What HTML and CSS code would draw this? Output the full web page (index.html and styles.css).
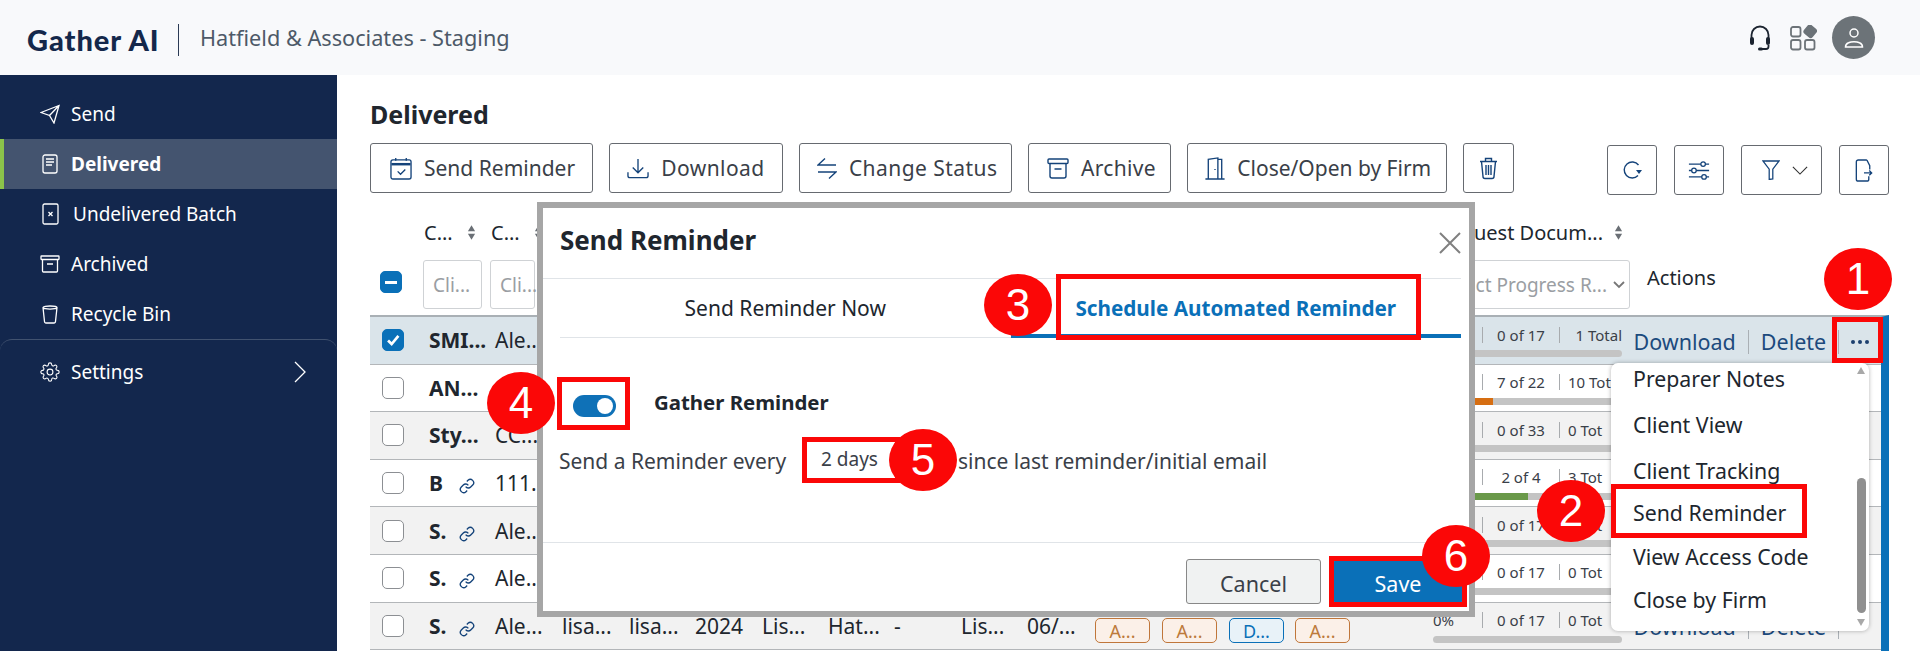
FILE: index.html
```html
<!DOCTYPE html>
<html lang="en">
<head>
<meta charset="utf-8">
<title>Gather AI - Delivered</title>
<link rel="stylesheet" href="styles.css">
</head>
<body>
<svg class="defs" width="0" height="0" aria-hidden="true">
  <symbol id="i-link" viewBox="0 0 24 24"><path d="M10 13a5 5 0 0 0 7.54.54l3-3a5 5 0 0 0-7.07-7.07l-1.72 1.71"/><path d="M14 11a5 5 0 0 0-7.54-.54l-3 3a5 5 0 0 0 7.07 7.07l1.71-1.71"/></symbol>
  <symbol id="i-sort" viewBox="0 0 10 16"><path d="M5 0l4 6.5H1zM5 16l-4-6.5h8z"/></symbol>
  <symbol id="i-check" viewBox="0 0 20 20"><path d="M4.5 10.5l4 4 7.5-9"/></symbol>
</svg>
<div class="app">
  <header class="topbar">
    <span class="logo">Gather AI</span>
    <span class="firm">Hatfield &amp; Associates - Staging</span>
    <div class="top-icons">
      <svg class="ic-headset" viewBox="0 0 22 26"><path class="st" d="M2.5 15V10a8.5 8.5 0 0 1 17 0v5"/><rect class="fl" x="1" y="12" width="4" height="8" rx="2"/><rect class="fl" x="17" y="12" width="4" height="8" rx="2"/><path class="st" d="M19.5 20v1.500a2.500 2.500 0 0 1-2.500 2.500h-4"/><rect class="fl" x="9" y="22.500" width="5" height="3" rx="1.500"/></svg>
      <svg class="ic-apps" viewBox="0 0 27 26"><rect x="1" y="2" width="9.500" height="9.500" rx="2"/><rect x="1" y="15" width="9.500" height="9.500" rx="2"/><rect x="15" y="15" width="9.500" height="9.500" rx="2"/><rect class="solid" x="15.500" y="1.500" width="9.500" height="9.500" rx="2" transform="rotate(40 20.200 6.200)"/></svg>
      <span class="avatar"><svg viewBox="0 0 22 22"><circle cx="11" cy="6" r="4"/><path d="M2.500 20c0-2 1-3.500 3-4.300 1.500-.7 3-1 5.500-1s4 .3 5.500 1c2 .8 3 2.300 3 4.300z"/></svg></span>
    </div>
  </header>
  <div class="shell">
    <aside class="sidebar">
      <nav class="nav">
        <a class="nav-item"><svg class="nav-ic" viewBox="0 0 20 20"><path d="M1 8.500L19 1.500l-5 17.500-4.500-7.500zM9.500 11.500L19 1.500"/></svg>Send</a>
        <a class="nav-item active"><svg class="nav-ic" viewBox="0 0 20 20"><rect x="3" y="1" width="14" height="18" rx="2"/><path d="M6 5h8M6 8h8M6 11h6"/></svg>Delivered</a>
        <a class="nav-item undel"><svg class="nav-ic" viewBox="0 0 20 22"><rect x="3" y="1" width="15" height="20" rx="1.500"/><path d="M8.500 9l4 4M12.500 9l-4 4"/></svg>Undelivered Batch</a>
        <a class="nav-item"><svg class="nav-ic" viewBox="0 0 20 20"><rect x="1" y="2" width="18" height="3.500" rx=".5"/><path d="M2.500 5.500V17a1 1 0 0 0 1 1h13a1 1 0 0 0 1-1V5.500M7 10h6"/></svg>Archived</a>
        <a class="nav-item"><svg class="nav-ic" viewBox="0 0 20 20"><path d="M3 3.500c0-2 14-2 14 0l-1.500 14a1.500 1.500 0 0 1-1.500 1.500H6a1.500 1.500 0 0 1-1.500-1.500zM3 3.800c2 1.700 12 1.700 14 0"/></svg>Recycle Bin</a>
      </nav>
      <a class="nav-item settings"><svg class="nav-ic" viewBox="0 0 24 24"><circle cx="12" cy="12" r="3.500"/><path d="M19.400 15a1.650 1.650 0 0 0 .33 1.820l.06.06a2 2 0 0 1 0 2.830 2 2 0 0 1-2.830 0l-.06-.06a1.650 1.650 0 0 0-1.820-.33 1.650 1.650 0 0 0-1 1.510V21a2 2 0 0 1-2 2 2 2 0 0 1-2-2v-.09A1.650 1.650 0 0 0 9 19.400a1.650 1.650 0 0 0-1.820.33l-.06.06a2 2 0 0 1-2.830 0 2 2 0 0 1 0-2.830l.06-.06a1.650 1.650 0 0 0 .33-1.820 1.650 1.650 0 0 0-1.510-1H3a2 2 0 0 1-2-2 2 2 0 0 1 2-2h.09A1.650 1.650 0 0 0 4.600 9a1.650 1.650 0 0 0-.33-1.820l-.06-.06a2 2 0 0 1 0-2.830 2 2 0 0 1 2.830 0l.06.06a1.650 1.650 0 0 0 1.820.33H9a1.650 1.650 0 0 0 1-1.510V3a2 2 0 0 1 2-2 2 2 0 0 1 2 2v.09a1.650 1.650 0 0 0 1 1.510 1.650 1.650 0 0 0 1.820-.33l.06-.06a2 2 0 0 1 2.830 0 2 2 0 0 1 0 2.830l-.06.06a1.650 1.650 0 0 0-.33 1.820V9a1.650 1.650 0 0 0 1.510 1H21a2 2 0 0 1 2 2 2 2 0 0 1-2 2h-.09a1.650 1.650 0 0 0-1.510 1z"/></svg>Settings<svg class="nav-chev" viewBox="0 0 12 22"><path d="M1 1l10 10L1 21"/></svg></a>
    </aside>
    <main class="main">
      <h1 class="page-title">Delivered</h1>
      <div class="toolbar">
        <button class="btn w-send"><svg class="tb-ic" viewBox="0 0 23 24"><rect x="1" y="3" width="21" height="20" rx="2"/><path d="M6 1v3M17 1v3"/><path class="thick" d="M1.500 7.500h20"/><path d="M8 15l3 3 5-5"/></svg>Send Reminder</button>
        <button class="btn w-down"><svg class="tb-ic" viewBox="0 0 23 22"><path d="M11.500 1v14M6 10l5.500 5.500L17 10M1 15v3.500a2 2 0 0 0 2 2h17a2 2 0 0 0 2-2V15"/></svg>Download</button>
        <button class="btn w-status"><svg class="tb-ic ic-swap" viewBox="0 0 20 22"><path d="M8 1L1 7.500h18M12 21l7-6.500H1"/></svg>Change Status</button>
        <button class="btn w-arch"><svg class="tb-ic" viewBox="0 0 22 21"><rect x="1" y="1" width="20" height="4.500" rx="1"/><path d="M3 5.500V18a2 2 0 0 0 2 2h12a2 2 0 0 0 2-2V5.500M7.500 11h7"/></svg>Archive</button>
        <button class="btn w-firm"><svg class="tb-ic ic-door" viewBox="0 0 20 24"><path d="M0 23h20M3 23V2.500L13 1v22M13 2.500h4V23M10 12.500v1"/></svg>Close/Open by Firm</button>
        <button class="btn square"><svg class="tb-ic ic-trash" viewBox="0 0 19 22"><path d="M1 4h17M6.500 3.500V1h6v2.500M2.500 4l1.500 15a2 2 0 0 0 2 2h7a2 2 0 0 0 2-2l1.500-15M7 7.500v10M9.500 7.500v10M12 7.500v10"/></svg></button>
        <div class="tool-right">
          <button class="btn square"><svg class="tb-ic ic-sm" viewBox="0 0 20 20"><path d="M16.500 5A8 8 0 1 0 16 15.500"/><path class="solid" d="M14 10h6l-3 4z"/></svg></button>
          <button class="btn square"><svg class="tb-ic" viewBox="0 0 24 22"><path d="M1 4h13M19 4h4M1 11h3M9 11h14M1 18h14M20 18h3"/><circle cx="16.500" cy="4" r="2.500"/><circle cx="6.500" cy="11" r="2.500"/><circle cx="17.500" cy="18" r="2.500"/></svg></button>
          <button class="btn filter"><svg class="tb-ic ic-funnel" viewBox="0 0 20 22"><path d="M1 1h18l-7 9v11l-4 .5V10z"/></svg><svg class="chev" viewBox="0 0 18 10"><path d="M1 1l8 8 8-8"/></svg></button>
          <button class="btn square"><svg class="tb-ic" viewBox="0 0 18 24"><path d="M12 1H3a2 2 0 0 0-2 2v18a2 2 0 0 0 2 2h9a2 2 0 0 0 2-2v-3M12 1l3 6v4M9 14.500h8M14.500 12l2.500 2.500-2.500 2.500"/></svg></button>
        </div>
      </div>

      <div class="grid head-a">
        <span></span>
        <span class="th">C...<svg class="sort"><use href="#i-sort"/></svg></span>
        <span class="th">C...<svg class="sort"><use href="#i-sort"/></svg></span>
        <span class="th th-doc">uest Docum...<svg class="sort"><use href="#i-sort"/></svg></span>
      </div>
      <div class="grid head-b">
        <span class="check-cell head-check"><span class="box on"><i class="minus"></i></span></span>
        <span class="filter-box">Cli...</span>
        <span class="filter-box">Cli...</span>
        <span class="filter-box fb-progress">ct Progress R...<svg class="mini-chev" viewBox="0 0 12 8"><path d="M1 1l5 5 5-5"/></svg></span>
        <span class="actions-h">Actions</span>
      </div>

      <div class="rows">
        <div class="grid row selected">
          <span class="check-cell"><span class="box on"><svg class="tick"><use href="#i-check"/></svg></span></span>
          <span class="cell name">SMI...</span><span class="cell">Ale...</span>
          <span class="prog"><span></span><span class="frac">0 of 17</span><span class="tot">1 Total</span><span class="bar"><i></i></span></span>
          <span class="acts"><a>Download</a><a>Delete</a><span class="more"><svg viewBox="0 0 18 4"><circle cx="2" cy="2" r="2"/><circle cx="9" cy="2" r="2"/><circle cx="16" cy="2" r="2"/></svg></span></span>
        </div>
        <div class="grid row">
          <span class="check-cell"><span class="box"></span></span>
          <span class="cell name">AN...</span>
          <span class="prog cut"><span></span><span class="frac">7 of 22</span><span class="tot">10 Tot</span><span class="bar"><i class="orange" style="width:32%"></i></span></span>
        </div>
        <div class="grid row alt">
          <span class="check-cell"><span class="box"></span></span>
          <span class="cell name">Sty...</span><span class="cell">CC...</span>
          <span class="prog cut"><span></span><span class="frac">0 of 33</span><span class="tot">0 Tot</span><span class="bar"><i></i></span></span>
        </div>
        <div class="grid row">
          <span class="check-cell"><span class="box"></span></span>
          <span class="cell name linked">B<svg class="link"><use href="#i-link"/></svg></span><span class="cell">111...</span>
          <span class="prog cut"><span></span><span class="frac">2 of 4</span><span class="tot">3 Tot</span><span class="bar"><i class="green" style="width:50%"></i></span></span>
        </div>
        <div class="grid row alt">
          <span class="check-cell"><span class="box"></span></span>
          <span class="cell name linked">S.<svg class="link"><use href="#i-link"/></svg></span><span class="cell">Ale...</span>
          <span class="prog cut"><span></span><span class="frac">0 of 17</span><span class="tot">0 Tot</span><span class="bar"><i></i></span></span>
        </div>
        <div class="grid row">
          <span class="check-cell"><span class="box"></span></span>
          <span class="cell name linked">S.<svg class="link"><use href="#i-link"/></svg></span><span class="cell">Ale...</span>
          <span class="prog cut"><span></span><span class="frac">0 of 17</span><span class="tot">0 Tot</span><span class="bar"><i></i></span></span>
        </div>
        <div class="grid row alt full">
          <span class="check-cell"><span class="box"></span></span>
          <span class="cell name linked">S.<svg class="link"><use href="#i-link"/></svg></span><span class="cell">Ale...</span>
          <span class="cell">lisa...</span><span class="cell">lisa...</span><span class="cell">2024</span><span class="cell">Lis...</span><span class="cell">Hat...</span><span class="cell">-</span><span class="cell">Lis...</span><span class="cell">06/...</span>
          <span class="tag">A...</span><span class="tag">A...</span><span class="tag blue">D...</span><span class="tag">A...</span>
          <span class="prog cut"><span class="pct">0%</span><span class="frac">0 of 17</span><span class="tot">0 Tot</span><span class="bar"><i></i></span></span>
          <span class="acts"><a>Download</a><a>Delete</a><span class="more"></span></span>
        </div>
      </div>
    </main>
  </div>

  <div class="menu">
    <div class="menu-list">
      <div class="menu-item">Preparer Notes</div>
      <div class="menu-item">Client View</div>
      <div class="menu-item">Client Tracking</div>
      <div class="menu-item tight first-tight">Send Reminder</div>
      <div class="menu-item tight">View Access Code</div>
      <div class="menu-item tight">Close by Firm</div>
    </div>
    <i class="sb-up"></i><i class="sb-thumb"></i><i class="sb-down"></i>
  </div>

  <section class="modal">
    <div class="modal-head"><h2>Send Reminder</h2><svg class="close" viewBox="0 0 22 22"><path d="M1 1l20 20M21 1L1 21"/></svg></div>
    <div class="tabs"><span class="tab">Send Reminder Now</span><span class="tab current">Schedule Automated Reminder</span></div>
    <div class="modal-body">
      <div class="toggle-row"><span class="toggle"><i></i></span><strong>Gather Reminder</strong></div>
      <div class="every"><span class="lead">Send a Reminder every</span><span class="days">2 days</span><span>since last reminder/initial email</span></div>
    </div>
    <div class="modal-foot"><button class="m-btn cancel">Cancel</button><button class="m-btn save">Save</button></div>
  </section>

  <i class="rbox r1"></i><i class="rbox r2"></i><i class="rbox r3"></i><i class="rbox r4"></i><i class="rbox r5"></i><i class="rbox r6"></i>
  <span class="num n1">1</span><span class="num n2">2</span><span class="num n3">3</span><span class="num n4">4</span><span class="num n5">5</span><span class="num n6">6</span>
</div>
</body>
</html>
```
FILE: styles.css
```css
* { box-sizing: border-box; }
html, body { margin: 0; padding: 0; }
body { font-family: "Noto Sans", "Lato", sans-serif; color: #20262e; background: #fff; }
.defs { position: absolute; }
button { font-family: inherit; }
a { text-decoration: none; }
.app { position: relative; width: 1920px; height: 651px; overflow: hidden; display: flex; flex-direction: column; }

/* top bar */
.topbar { height: 75px; flex: none; background: #f8f9fb; display: flex; align-items: center; padding: 0 45px 0 27px; }
.logo { width: 152px; font-family: "Lato", sans-serif; font-size: 29px; font-weight: 900; color: #14284b; height: 32px; line-height: 32px; border-right: 1px solid #2b3a55; letter-spacing: .95px; position: relative; top: 2px; }
.firm { font-size: 21.700px; color: #4d5968; margin-left: 21px; }
.top-icons { margin-left: auto; display: flex; align-items: center; }
.ic-headset { width: 22px; height: 26px; margin-right: 19px; }
.ic-headset .st { fill: none; stroke: #1c2430; stroke-width: 1.8; }
.ic-headset .fl { fill: #1c2430; }
.ic-apps { width: 27px; height: 26px; margin-right: 15px; fill: none; stroke: #6c7378; stroke-width: 1.8; }
.ic-apps .solid { fill: #6c7378; }
.avatar { width: 43px; height: 43px; border-radius: 50%; background: #6c7378; display: flex; align-items: center; justify-content: center; }
.avatar svg { width: 22px; height: 22px; fill: none; stroke: #fff; stroke-width: 1.5; }

/* sidebar */
.shell { flex: 1; display: flex; min-height: 0; }
.sidebar { width: 337px; flex: none; background: #13274d; padding-top: 14px; color: #fff; }
.nav-item { display: flex; align-items: center; height: 50px; padding: 0 0 1px 40px; font-size: 19px; color: #fff; }
.nav-ic { width: 20px; height: 20px; margin-right: 11px; fill: none; stroke: #fff; stroke-width: 1.3; flex: none; }
.nav-item.active { background: #44546f; border-left: 4px solid #8bc34a; padding-left: 36px; font-weight: 700; }
.nav-item.undel .nav-ic { width: 20px; height: 22px; margin-right: 13px; }
.settings { border-top: 1px solid #41526f; border-radius: 12px 12px 0 0; height: 66px; padding-right: 31px; padding-bottom: 2px; }
.nav-chev { width: 12px; height: 22px; margin-left: auto; fill: none; stroke: #fff; stroke-width: 1.3; }

/* main */
.main { flex: 1; min-width: 0; padding: 20.500px 31px 0 33px; }
.page-title { margin: 0 0 11.500px; font-size: 25px; line-height: 36px; font-weight: 700; color: #20262e; }
.toolbar { display: flex; gap: 16.200px; height: 50px; }
.btn { height: 50px; background: #fff; border: 1px solid #666a70; border-radius: 3px; display: flex; align-items: center; padding: 0 0 0 19px; font-size: 21px; color: #3a4048; gap: 12px; white-space: nowrap; }
.w-send { width: 223px; }
.w-down { width: 173.500px; padding-left: 17px; letter-spacing: .45px; }
.w-status { width: 213px; padding-left: 17px; letter-spacing: .45px; }
.w-arch { width: 143px; padding-left: 18px; letter-spacing: .3px; }
.w-firm { width: 260px; padding-left: 17px; }
.square { width: 51px; padding: 0; justify-content: center; }
.tool-right .square { width: 50.500px; }
.filter { width: 81px; padding: 0 0 0 20px; gap: 12px; }
.tool-right { display: flex; gap: 16.600px; margin: 2px 0 0 auto; }
.tb-ic { width: 22px; height: 23px; fill: none; stroke: #14437a; stroke-width: 1.4; flex: none; }
.tb-ic .thick { stroke-width: 2.600; }
.tb-ic .solid { fill: #14437a; stroke: none; }
.ic-swap { width: 20px; }
.ic-door { width: 20px; }
.ic-trash { width: 19px; }
.ic-sm { width: 20px; height: 20px; }
.ic-funnel { width: 18px; height: 20px; }
.chev { width: 16px; height: 9px; fill: none; stroke: #333; stroke-width: 1.3; }

/* table */
.grid { display: grid; grid-template-columns: 53px 67px 67px 67px 66px 67px 66px 66px 67px 66px 68px 67px 67px 66px 139px 201px 251px; }
.head-a { height: 67px; padding-top: 12px; align-items: center; }
.th { font-size: 20px; color: #20262e; display: flex; align-items: center; padding-left: 1px; }
.sort { width: 9px; height: 15px; margin-left: 14px; fill: #6a6f75; flex: none; }
.th-doc { grid-column: 15 / 17; justify-content: flex-end; padding-right: 7px; }
.th-doc .sort { margin-left: 11px; }
.head-b { height: 49px; margin-bottom: 6px; }
.filter-box { border: 1px solid #cfd2d5; border-radius: 3px; display: flex; align-items: center; padding-left: 9px; font-size: 19px; color: #9a9ea3; background: #fff; }
.filter-box:nth-child(2) { margin-right: 8px; }
.filter-box:nth-child(3) { margin-right: 22px; }
.fb-progress { grid-column: 15 / 17; padding: 0 4px 0 0; justify-content: flex-end; }
.mini-chev { width: 12px; height: 8px; margin-left: 6px; fill: none; stroke: #777; stroke-width: 1.8; }
.actions-h { grid-column: 17; padding-left: 17px; font-size: 20px; line-height: 36px; height: 36px; }
.check-cell { display: flex; align-items: center; padding-left: 12px; }
.head-check { padding: 0 0 5px 10px; }
.box { width: 22px; height: 22px; border: 1.500px solid #8c8f93; border-radius: 5px; background: #fff; display: flex; align-items: center; justify-content: center; }
.box.on { background: #0a70b8; border-color: #0a70b8; }
.minus { width: 12px; height: 3px; background: #fff; }
.tick { width: 18px; height: 18px; fill: none; stroke: #fff; stroke-width: 3; }
.rows { border-top: 2px solid #a9b0b5; border-right: 8px solid #0a70b8; height: 340px; }
.row { height: 47.600px; border-bottom: 1.500px solid #b3b6b9; align-items: center; position: relative; background: #fff; }
.row.alt { background: #f2f2f2; }
.row.selected { background: #dae4ea; }
.cell { font-size: 21px; padding-left: 5px; white-space: nowrap; overflow: hidden; color: #20262e; }
.name { font-weight: 700; padding-left: 6px; }
.linked { display: flex; align-items: center; overflow: visible; position: relative; }
.link { width: 16px; height: 16px; fill: none; stroke: #14437a; stroke-width: 2; position: absolute; left: 36px; top: 9px; }
.tag { margin-left: 5px; width: 55px; height: 25px; border: 1px solid #c0763a; background: #fbf0e8; color: #bd7a3b; border-radius: 5px; font-size: 18px; display: flex; align-items: center; justify-content: center; align-self: end; margin-bottom: 6px; }
.tag.blue { border-color: #0a70b8; background: #e8f2f8; color: #0a70b8; }
.prog { grid-column: 16; margin-left: 4px; width: 189px; height: 100%; display: grid; grid-template-columns: 49px 78px 62px; grid-template-rows: 31px 7px; padding-top: 2px; align-content: start; font-size: 15px; color: #3a4048; }
.pct { align-self: center; }
.frac { border-left: 1px solid #a8abae; border-right: 1px solid #a8abae; text-align: center; height: 16px; line-height: 16px; align-self: center; }
.tot { text-align: right; align-self: center; white-space: nowrap; }
.cut .tot { text-align: left; padding-left: 8px; }
.bar { grid-column: 1 / 4; height: 7px; background: #c4c4c4; border-radius: 4px; overflow: hidden; display: block; }
.bar i { display: block; height: 100%; }
.bar .orange { background: #d66e12; }
.bar .green { background: #6a994a; }
.acts { grid-column: 17; display: flex; align-items: center; padding: 3px 0 0 3.500px; font-size: 21.500px; color: #1c4a7d; height: 100%; }
.acts a { color: #1c4a7d; padding-right: 12px; margin-right: 12px; border-right: 1px solid #aab0b5; line-height: 24px; }
.more { width: 44px; display: flex; justify-content: center; }
.more svg { width: 18px; height: 4px; fill: #1c3f6e; }
.acts a:nth-child(2) { padding-right: 12px; margin-right: 0; }

/* dropdown */
.menu { position: absolute; left: 1611px; top: 363px; width: 258px; height: 268px; background: #fff; border-radius: 7px; box-shadow: 0 0 4px rgba(0,0,0,.3); overflow: hidden; z-index: 2; }
.menu-list { margin-top: -8px; }
.menu-item { height: 46px; padding-left: 22px; display: flex; align-items: center; font-size: 21.300px; color: #20262e; }
.menu-item.tight { height: 43.500px; }
.first-tight { margin-top: -2px; }
.sb-thumb { position: absolute; left: 246px; top: 115px; width: 9px; height: 135px; background: #8f8f8f; border-radius: 5px; }
.sb-up, .sb-down { position: absolute; left: 246px; width: 0; height: 0; border-left: 4.500px solid transparent; border-right: 4.500px solid transparent; }
.sb-up { top: 4px; border-bottom: 7px solid #a8a8a8; }
.sb-down { top: 256px; border-top: 7px solid #a8a8a8; }

/* modal */
.modal { position: absolute; left: 537px; top: 202px; width: 938px; height: 415px; background: #fff; border: 6px solid #a6a6a6; z-index: 3; display: flex; flex-direction: column; }
.modal-head { height: 71px; flex: none; margin-right: 8px; border-bottom: 1px solid #e0e4e8; display: flex; align-items: center; justify-content: space-between; padding: 0 0 4px 17px; }
.modal-head h2 { margin: 0; font-size: 26px; line-height: 34px; font-weight: 700; color: #20262e; position: relative; top: -1px; }
.close { width: 22px; height: 22px; fill: none; stroke: #808080; stroke-width: 2; margin: 4px 0 0 0; }
.tabs { margin: 0 8px 0 17px; height: 59px; display: flex; border-bottom: 1px solid #e0e4e8; flex: none; }
.tab { flex: 1 1 0; height: 59px; display: flex; align-items: center; justify-content: center; font-size: 21px; padding-bottom: 1px; color: #20262e; }
.tab.current { color: #0a70b8; font-size: 20.700px; font-weight: 700; border-bottom: 4px solid #0a70b8; padding-top: 3px; }
.modal-body { flex: 1; padding: 0; display: flex; flex-direction: column; }
.toggle-row { display: flex; align-items: center; padding: 54px 0 0 30px; }
.toggle { width: 43px; height: 22px; border-radius: 11px; background: #0f71b7; position: relative; display: block; flex: none; }
.toggle i { position: absolute; right: 3px; top: 3px; width: 16px; height: 16px; border-radius: 50%; background: #fff; }
.toggle-row strong { margin-left: 38px; font-size: 20.400px; font-weight: 700; color: #20262e; position: relative; top: -4px; }
.every { display: flex; align-items: center; font-size: 21px; padding: 27px 0 0 16px; color: #3a4048; }
.lead { width: 231px; white-space: nowrap; }
.days { width: 137px; margin-left: 31px; font-size: 19px; position: relative; top: -2px; white-space: nowrap; }
.modal-foot { height: 69px; flex: none; border-top: 1px solid #e0e4e8; display: flex; justify-content: flex-end; padding: 16px 7px 0 0; gap: 13px; }
.m-btn { height: 45px; font-size: 21.500px; border-radius: 3px; padding: 3px 0 0; }
.cancel { width: 135px; background: #f0f2f2; border: 1px solid #888; color: #3a4048; }
.save { width: 128px; background: #0a70b8; border: none; color: #fff; }

/* annotations */
.rbox { position: absolute; border: 5px solid #fb0707; z-index: 4; display: block; }
.r1 { left: 1832px; top: 317px; width: 51px; height: 46px; }
.r2 { left: 1611px; top: 484px; width: 196px; height: 54px; }
.r3 { left: 1056px; top: 274px; width: 365px; height: 66px; }
.r4 { left: 557px; top: 377px; width: 73px; height: 53px; }
.r5 { left: 802px; top: 437px; width: 98px; height: 46px; }
.r6 { left: 1329px; top: 556px; width: 138px; height: 51px; }
.num { position: absolute; width: 68px; height: 62px; border-radius: 50%; background: #fb0707; color: #fff; font-family: "Liberation Sans", Arial, sans-serif; font-size: 44px; line-height: 62px; text-align: center; z-index: 5; }
.n1 { left: 1824px; top: 248px; }
.n2 { left: 1537px; top: 480px; }
.n3 { left: 984px; top: 274px; }
.n4 { left: 487px; top: 372px; }
.n5 { left: 889px; top: 429px; }
.n6 { left: 1422px; top: 525px; }
```
